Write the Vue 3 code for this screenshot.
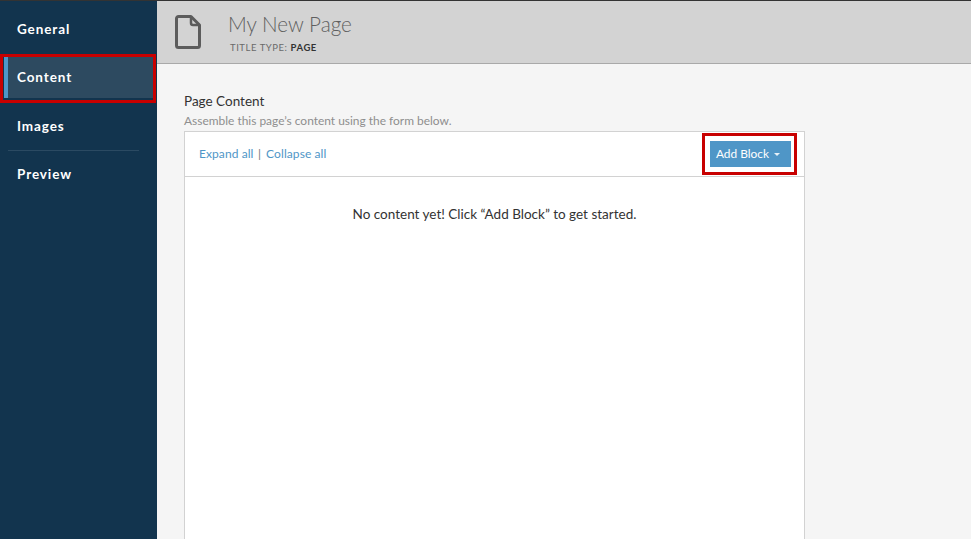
<template>
  <div class="app">
    <nav class="sidebar">
      <a class="nav-item general">General</a>
      <div class="active-frame"><a class="nav-item active">Content</a></div>
      <a class="nav-item images">Images</a>
      <div class="divider"></div>
      <a class="nav-item preview">Preview</a>
    </nav>
    <main class="main">
      <header class="header">
        <svg class="doc" width="26" height="34" viewBox="0 0 26 34" fill="none" stroke="#5c5c5c" stroke-width="3" stroke-linejoin="round">
          <path d="M3.500 1.500H16L24.500 10V30.500a2 2 0 0 1-2 2H3.500a2 2 0 0 1-2-2V3.500a2 2 0 0 1 2-2Z"/>
          <path d="M16 1.500V8a2 2 0 0 0 2 2h6.500" stroke-width="2.500"/>
        </svg>
        <div class="titles">
          <h1>My New Page</h1>
          <div class="type">TITLE TYPE: <b>PAGE</b></div>
        </div>
      </header>
      <section class="body">
        <div class="label">Page Content</div>
        <div class="hint">Assemble this page’s content using the form below.</div>
        <div class="card">
          <div class="toolbar">
            <div class="links"><a>Expand all</a><span class="sep">|</span><a>Collapse all</a></div>
            <div class="btn-frame"><button class="btn">Add Block<span class="caret"></span></button></div>
          </div>
          <p class="empty">No content yet! Click “Add Block” to get started.</p>
        </div>
      </section>
    </main>
  </div>
</template>

<script setup>
</script>

<style>
html, body { margin: 0; height: 100%; overflow: hidden; }
</style>

<style scoped>
.app {
  display: flex;
  width: 971px;
  height: 539px;
  overflow: hidden;
  font-family: "Lato", sans-serif;
  background: #f5f5f5;
  border-top: 1px solid #333;
  box-sizing: border-box;
}
.sidebar {
  width: 157px;
  flex: none;
  background: #12344e;
  display: flex;
  flex-direction: column;
  align-items: stretch;
}
.nav-item {
  display: flex;
  align-items: center;
  box-sizing: border-box;
  padding-left: 17px;
  color: #fff;
  font: 700 13.500px/1 "Lato", sans-serif;
  letter-spacing: 0.9px;
}
.general { height: 53px; padding-top: 5px; }
.active-frame {
  height: 49px;
  width: 156px;
  box-sizing: border-box;
  border: 3px solid #c80000;
  padding: 0 0 2px 1px;
}
.active-frame .nav-item {
  height: 41px;
  padding-left: 9px;
  background: #2d4a60;
  border-left: 4px solid #4f96c7;
}
.images { height: 47px; }
.divider {
  height: 1px;
  margin: 0 18px 0 8px;
  background: #2b4a62;
}
.preview { height: 46px; padding-top: 2px; }
.main {
  flex: 1;
  display: flex;
  flex-direction: column;
  min-width: 0;
}
.header {
  height: 63px;
  flex: none;
  box-sizing: border-box;
  background: #d3d3d3;
  border-bottom: 1px solid #a9a9a9;
  display: flex;
  align-items: flex-start;
  padding: 14px 0 0 18px;
}
.doc { flex: none; margin-right: 27px; }
.titles { margin-top: -5px; }
h1 {
  margin: 0;
  font: 300 20.700px/28px "Lato", sans-serif;
  color: #5f5f5f;
}
.type {
  margin-top: 3px;
  padding-left: 2px;
  font: 400 9.500px/13px "Lato", sans-serif;
  letter-spacing: 0.55px;
  color: #6a6a6a;
}
.type b { color: #333; font-weight: 700; }
.body { padding: 29px 0 0 27px; }
.label {
  font: 400 13.500px/16px "Lato", sans-serif;
  color: #333;
}
.hint {
  margin-top: 4px;
  font: 400 11.950px/15px "Lato", sans-serif;
  color: #8e8e8e;
}
.card {
  margin-top: 3px;
  width: 621px;
  height: 420px;
  box-sizing: border-box;
  background: #fff;
  border: 1px solid #d2d2d2;
}
.toolbar {
  height: 45px;
  box-sizing: border-box;
  border-bottom: 1px solid #d2d2d2;
  display: flex;
  align-items: center;
  justify-content: space-between;
  padding: 0 13px 0 14px;
}
.links {
  font: 400 12px/1 "Lato", sans-serif;
  letter-spacing: 0.08px;
  color: #4f96c7;
}
.sep { margin: 0 5px 0 4.500px; color: #777; }
.btn-frame {
  position: relative;
  display: flex;
}
.btn-frame::after {
  content: "";
  position: absolute;
  inset: -8px -6px -8px -8px;
  border: 3px solid #c80000;
  pointer-events: none;
}
.btn {
  width: 81px;
  height: 26px;
  padding: 0 5px 0 0;
  border: 0;
  background: #4f96c7;
  color: #fff;
  font: 400 11.900px/1 "Lato", sans-serif;
  display: flex;
  align-items: center;
  justify-content: center;
}
.caret {
  margin-left: 5px;
  border-left: 3.500px solid transparent;
  border-right: 3.500px solid transparent;
  border-top: 3px solid #e8f1f8;
}
.empty {
  margin: 29px 0 0;
  text-align: center;
  font: 400 13.500px/16px "Lato", sans-serif;
  color: #333;
}
</style>
